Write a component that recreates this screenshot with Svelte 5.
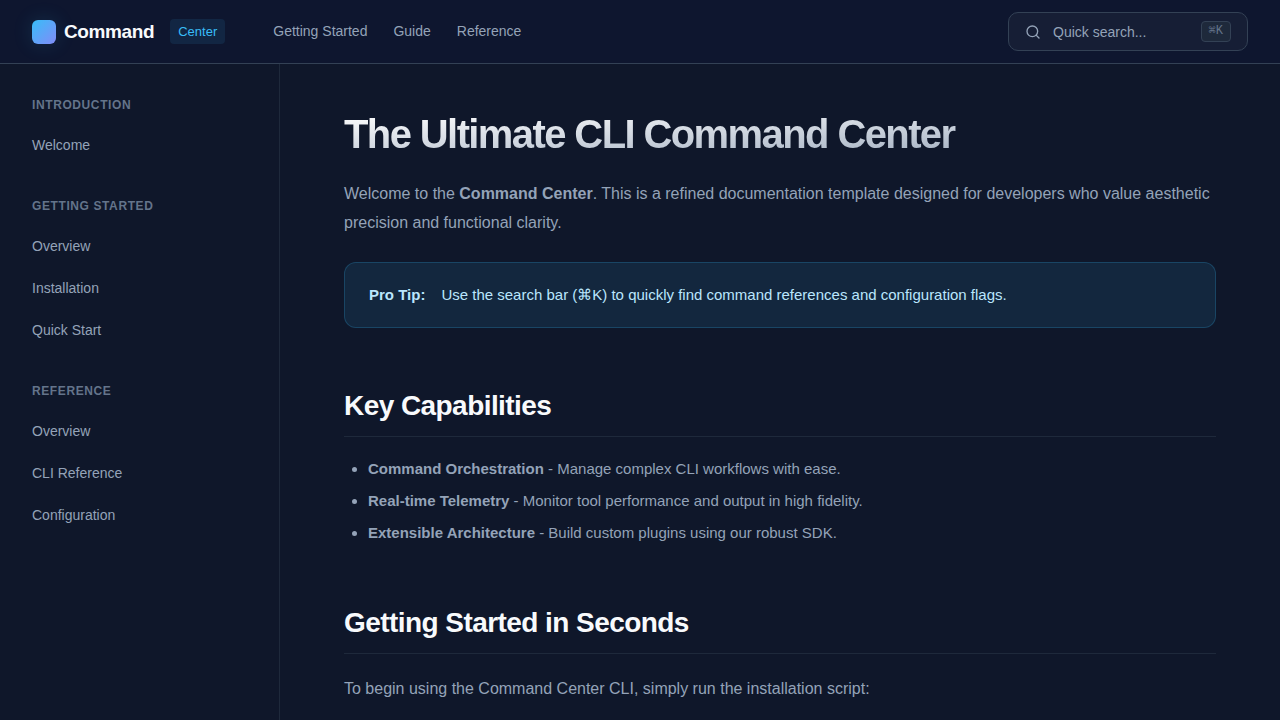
<script lang="ts">
  interface NavLink {
    label: string;
    href: string;
  }

  const topLinks: NavLink[] = [
    { label: "Getting Started", href: "#getting-started" },
    { label: "Guide", href: "#guide" },
    { label: "Reference", href: "#reference" },
  ];

  const sections: { title: string; links: NavLink[] }[] = [
    {
      title: "Introduction",
      links: [{ label: "Welcome", href: "#welcome" }],
    },
    {
      title: "Getting Started",
      links: [
        { label: "Overview", href: "#start-overview" },
        { label: "Installation", href: "#installation" },
        { label: "Quick Start", href: "#quick-start" },
      ],
    },
    {
      title: "Reference",
      links: [
        { label: "Overview", href: "#reference-overview" },
        { label: "CLI Reference", href: "#cli-reference" },
        { label: "Configuration", href: "#configuration" },
      ],
    },
  ];

  const capabilities = [
    { name: "Command Orchestration", text: "Manage complex CLI workflows with ease." },
    { name: "Real-time Telemetry", text: "Monitor tool performance and output in high fidelity." },
    { name: "Extensible Architecture", text: "Build custom plugins using our robust SDK." },
  ];

  let query = $state("");
</script>

<header class="topbar">
  <a class="brand" href="#welcome">
    <span class="logo"></span>
    <span class="brand-name">Command</span>
    <span class="badge">Center</span>
  </a>

  <nav class="top-nav">
    {#each topLinks as link (link.href)}
      <a href={link.href}>{link.label}</a>
    {/each}
  </nav>

  <label class="search">
    <svg viewBox="0 0 24 24" width="16" height="16" aria-hidden="true">
      <circle cx="11" cy="11" r="8" />
      <path d="m21 21-4.3-4.3" />
    </svg>
    <input type="text" placeholder="Quick search..." bind:value={query} />
    <kbd>⌘K</kbd>
  </label>
</header>

<div class="layout">
  <aside class="sidebar">
    {#each sections as section (section.title)}
      <section>
        <h3>{section.title}</h3>
        <ul>
          {#each section.links as link (link.href)}
            <li><a href={link.href}>{link.label}</a></li>
          {/each}
        </ul>
      </section>
    {/each}
  </aside>

  <main class="content">
    <h1>The Ultimate CLI Command Center</h1>
    <p>
      Welcome to the <strong>Command Center</strong>. This is a refined documentation template
      designed for developers who value aesthetic precision and functional clarity.
    </p>

    <div class="tip">
      <strong>Pro Tip:</strong>
      <span>Use the search bar (⌘K) to quickly find command references and configuration flags.</span>
    </div>

    <h2>Key Capabilities</h2>
    <ul class="capabilities">
      {#each capabilities as item (item.name)}
        <li><strong>{item.name}</strong> - {item.text}</li>
      {/each}
    </ul>

    <h2>Getting Started in Seconds</h2>
    <p>To begin using the Command Center CLI, simply run the installation script:</p>
  </main>
</div>

<style>
  :global(body) {
    background: #0f172a;
    color: #94a3b8;
    font-family: "Liberation Sans", Arial, sans-serif;
    font-size: 16px;
  }

  a {
    color: inherit;
    text-decoration: none;
  }

  .topbar {
    position: sticky;
    top: 0;
    box-sizing: border-box;
    height: 64px;
    padding: 0 32px;
    display: flex;
    align-items: center;
    background: #0e162f;
    border-bottom: 1px solid #334155;
  }

  .brand {
    display: flex;
    align-items: center;
    gap: 8px;
  }

  .logo {
    width: 24px;
    height: 24px;
    border-radius: 6px;
    background: linear-gradient(135deg, #38bdf8, #818cf8);
    box-shadow: 0 0 20px rgba(56, 189, 248, 0.15);
  }

  .brand-name {
    color: #f8fafc;
    font-size: 19px;
    font-weight: 700;
    line-height: 29px;
    letter-spacing: -0.02em;
  }

  .badge {
    margin-left: 8px;
    padding: 2px 8px;
    border-radius: 4px;
    background: rgba(56, 189, 248, 0.1);
    color: #38bdf8;
    font-size: 13px;
    line-height: 21px;
  }

  .top-nav {
    display: flex;
    gap: 26px;
    margin-left: 48px;
    font-size: 14px;
    line-height: 23px;
  }

  .search {
    box-sizing: border-box;
    width: 240px;
    margin-left: auto;
    padding: 8px 16px;
    display: flex;
    align-items: center;
    gap: 12px;
    border: 1px solid #334155;
    border-radius: 10px;
    background: #161e35;
  }

  .search svg {
    flex: none;
    fill: none;
    stroke: #94a3b8;
    stroke-width: 2;
    stroke-linecap: round;
    stroke-linejoin: round;
  }

  .search input {
    flex: 1;
    min-width: 0;
    height: 21px;
    padding: 0;
    border: 0;
    outline: 0;
    background: none;
    color: #f8fafc;
    font: inherit;
    font-size: 14px;
  }

  .search input::placeholder {
    color: #94a3b8;
    opacity: 1;
  }

  kbd {
    padding: 0 7px;
    border: 1px solid #334155;
    border-radius: 4px;
    background: #1e293b;
    color: #64748b;
    font-family: "Liberation Mono", monospace;
    font-size: 12px;
    line-height: 19px;
  }

  .layout {
    display: grid;
    grid-template-columns: 280px 1fr;
    min-height: calc(100vh - 64px);
  }

  .sidebar {
    padding: 32px;
    display: flex;
    flex-direction: column;
    gap: 32px;
    border-right: 1px solid #1e293b;
  }

  .sidebar h3 {
    margin: 0 0 10px;
    color: #64748b;
    font-size: 12px;
    line-height: 19px;
    letter-spacing: 0.05em;
    text-transform: uppercase;
  }

  .sidebar ul {
    margin: 0;
    padding: 0;
    display: flex;
    flex-direction: column;
    gap: 2px;
    list-style: none;
  }

  .sidebar li a {
    display: block;
    padding: 8px 0;
    font-size: 14px;
    line-height: 24px;
  }

  .content {
    padding: 48px 64px 0;
  }

  h1 {
    margin: 0 0 23px;
    background: linear-gradient(to bottom right, #ffffff, #94a3b8);
    background-clip: text;
    -webkit-background-clip: text;
    color: transparent;
    font-size: 40px;
    line-height: 44px;
    letter-spacing: -0.04em;
  }

  h2 {
    margin: 56px 0 20px;
    padding-bottom: 8px;
    border-bottom: 1px solid #1e293b;
    color: #f8fafc;
    font-size: 28px;
    line-height: 44px;
    letter-spacing: -0.02em;
  }

  p {
    margin: 0 0 25px;
    line-height: 29px;
  }

  .tip {
    display: flex;
    gap: 16px;
    padding: 20px 24px;
    border: 1px solid rgba(56, 189, 248, 0.2);
    border-radius: 12px;
    background: rgba(56, 189, 248, 0.1);
    color: #bae6fd;
    font-size: 15px;
    line-height: 24px;
  }

  .capabilities {
    margin: 0;
    padding-left: 24px;
    font-size: 15px;
    line-height: 24px;
  }

  .capabilities li + li {
    margin-top: 8px;
  }
</style>
